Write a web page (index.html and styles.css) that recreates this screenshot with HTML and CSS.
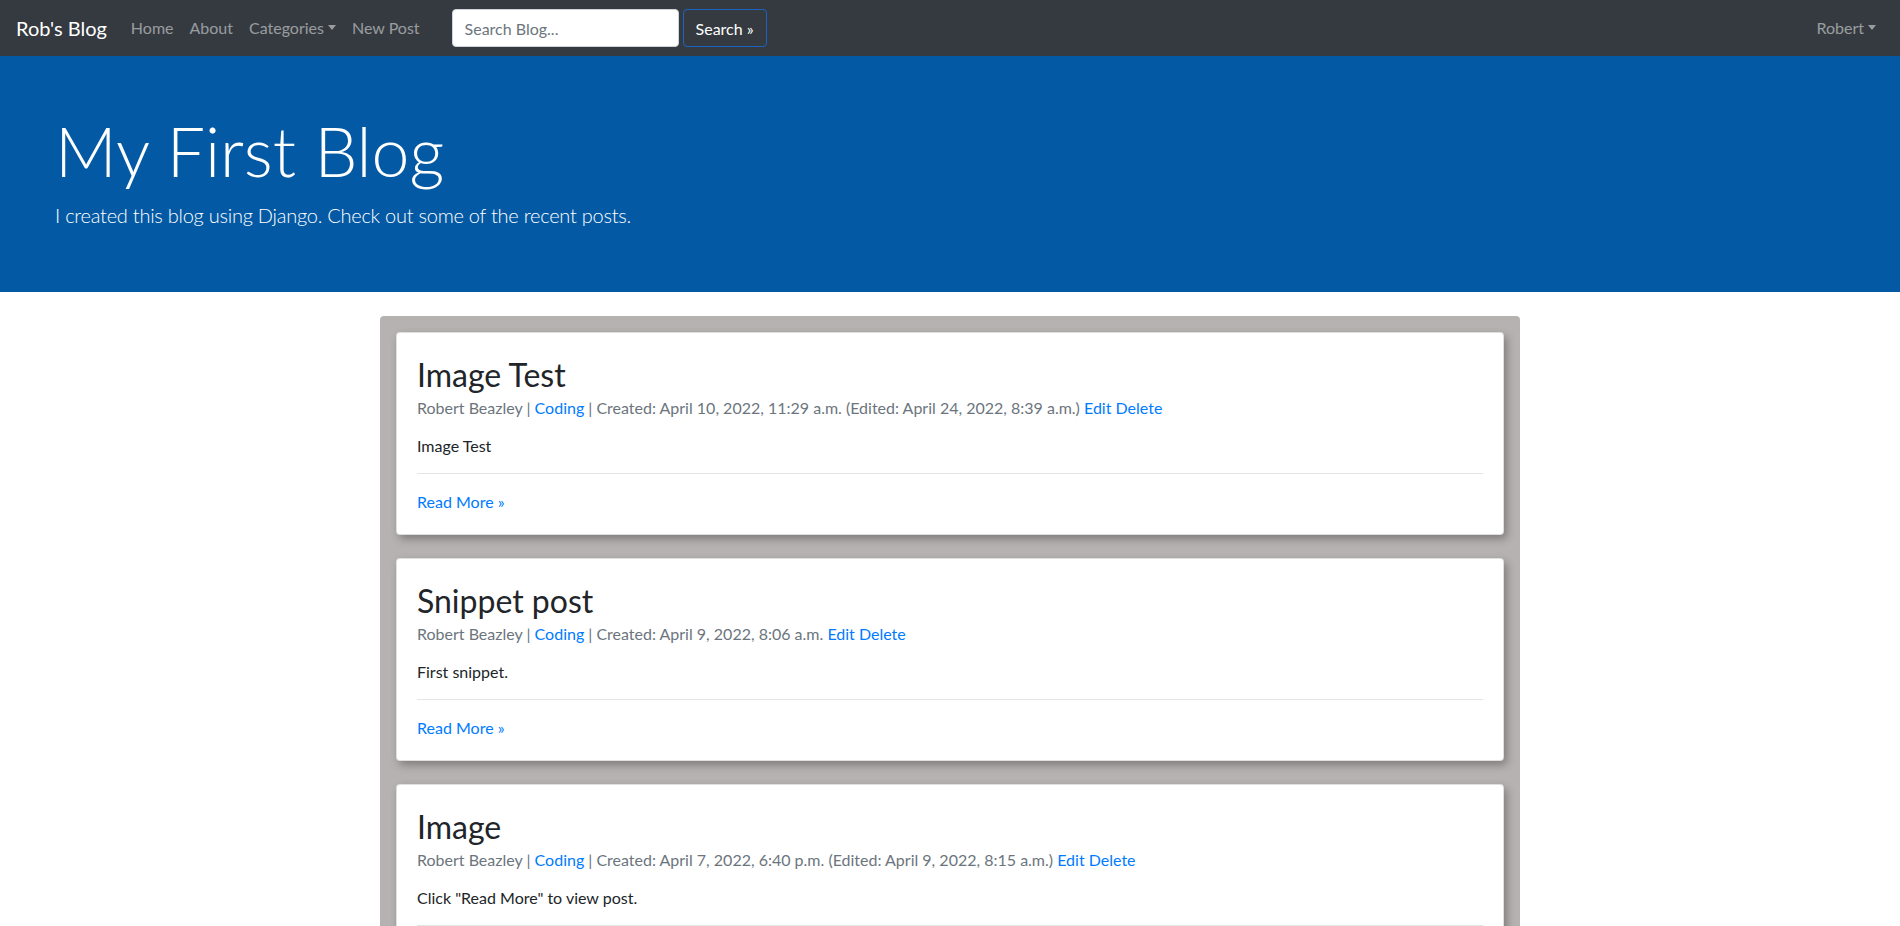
FILE: index.html
```html
<!DOCTYPE html>
<html lang="en">
<head>
<meta charset="utf-8">
<title>Rob's Blog</title>
<link rel="stylesheet" href="styles.css">
</head>
<body>
<nav class="navbar">
  <a class="brand" href="#">Rob's Blog</a>
  <ul class="nav">
    <li><a class="nav-link" href="#">Home</a></li>
    <li><a class="nav-link" href="#">About</a></li>
    <li><a class="nav-link caret" href="#">Categories</a></li>
    <li><a class="nav-link" href="#">New Post</a></li>
  </ul>
  <form class="search">
    <input class="search-input" type="search" placeholder="Search Blog...">
    <button class="search-btn" type="button">Search »</button>
  </form>
  <a class="nav-link caret user" href="#">Robert</a>
</nav>

<header class="jumbotron">
  <h1 class="display">My First Blog</h1>
  <p class="lead">I created this blog using Django. Check out some of the recent posts.</p>
</header>

<main class="container">
  <article class="card">
    <h2 class="card-title">Image Test</h2>
    <div class="meta">Robert Beazley | <a href="#">Coding</a> | Created: April 10, 2022, 11:29 a.m. (Edited: April 24, 2022, 8:39 a.m.) <a href="#">Edit</a> <a href="#">Delete</a></div>
    <p class="snippet">Image Test</p>
    <hr class="rule">
    <a class="more" href="#">Read More »</a>
  </article>
  <article class="card">
    <h2 class="card-title">Snippet post</h2>
    <div class="meta">Robert Beazley | <a href="#">Coding</a> | Created: April 9, 2022, 8:06 a.m. <a href="#">Edit</a> <a href="#">Delete</a></div>
    <p class="snippet">First snippet.</p>
    <hr class="rule">
    <a class="more" href="#">Read More »</a>
  </article>
  <article class="card">
    <h2 class="card-title">Image</h2>
    <div class="meta">Robert Beazley | <a href="#">Coding</a> | Created: April 7, 2022, 6:40 p.m. (Edited: April 9, 2022, 8:15 a.m.) <a href="#">Edit</a> <a href="#">Delete</a></div>
    <p class="snippet">Click "Read More" to view post.</p>
    <hr class="rule">
    <a class="more" href="#">Read More »</a>
  </article>
</main>
</body>
</html>
```
FILE: styles.css
```css
* { box-sizing: border-box; }
html, body { margin: 0; }
body {
  font-family: Lato, "Liberation Sans", sans-serif;
  font-size: 16px;
  line-height: 1.5;
  color: #212529;
  background: #fff;
}
a { color: #007bff; text-decoration: none; }

/* navbar */
.navbar {
  display: flex;
  align-items: center;
  height: 56px;
  padding: 8px 16px;
  background: #343a40;
}
.brand {
  color: #fff;
  font-size: 20px;
  line-height: 30px;
  padding: 5px 0;
  margin-right: 16px;
}
.nav {
  display: flex;
  list-style: none;
  margin: 0;
  padding: 0;
}
.nav-link {
  display: block;
  padding: 8px;
  color: rgba(255,255,255,.5);
  line-height: 24px;
}
.caret::after {
  content: "";
  display: inline-block;
  margin-left: 4px;
  vertical-align: 4px;
  border-top: 5px solid;
  border-left: 4.5px solid transparent;
  border-right: 4.5px solid transparent;
}
.search {
  display: flex;
  align-items: center;
  margin-left: 24px;
}
.search-input {
  width: 227px;
  height: 38px;
  padding: 6px 12px;
  margin-right: 4px;
  font-family: inherit;
  font-size: 16px;
  color: #495057;
  background: #fff;
  border: 1px solid #ced4da;
  border-radius: 4px;
}
.search-input::placeholder { color: #6c757d; }
.search-btn {
  height: 38px;
  padding: 6px 12px;
  font-family: inherit;
  font-size: 16px;
  color: #fff;
  background: transparent;
  border: 1px solid #1c64c4;
  border-radius: 4px;
}
.user { margin-left: auto; }

/* jumbotron */
.jumbotron {
  background: #0359a4;
  color: #fff;
  padding: 55px 55px 62px;
  margin-bottom: 24px;
}
.display {
  margin: 0 0 9px;
  font-size: 68px;
  font-weight: 300;
  line-height: 80px;
}
.lead {
  margin: 0;
  font-size: 20px;
  font-weight: 300;
  line-height: 30px;
  letter-spacing: -0.25px;
}

/* posts */
.container {
  width: 1140px;
  margin: 0 auto;
  padding: 16px;
  background: #b7b2b2;
  border-radius: 4px;
  display: flex;
  flex-direction: column;
  gap: 23px;
}
.card {
  background: #fff;
  border: 1px solid rgba(0,0,0,.125);
  border-radius: 4px;
  padding: 23px 20px 20px;
  box-shadow: 3px 4px 8px rgba(0,0,0,.3);
}
.card-title {
  margin: 0 0 2px;
  font-size: 32px;
  font-weight: 400;
  line-height: 38px;
}
.meta {
  color: #6c757d;
  line-height: 24px;
}
.snippet {
  margin: 14px 0 15px;
  line-height: 24px;
}
.rule {
  margin: 0 0 16px;
  border: 0;
  border-top: 1px solid rgba(0,0,0,.1);
}
.more {
  display: inline-block;
  line-height: 24px;
}
```
